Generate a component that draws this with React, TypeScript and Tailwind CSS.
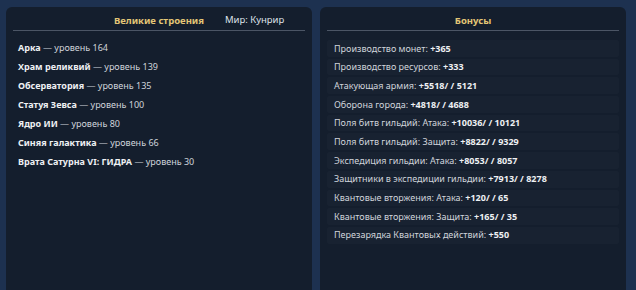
import { FC } from 'react';

type Wonder = { name: string; level: number };
type Bonus = { label: string; value: string };

const wonders: Wonder[] = [
  { name: 'Арка', level: 164 },
  { name: 'Храм реликвий', level: 139 },
  { name: 'Обсерватория', level: 135 },
  { name: 'Статуя Зевса', level: 100 },
  { name: 'Ядро ИИ', level: 80 },
  { name: 'Синяя галактика', level: 66 },
  { name: 'Врата Сатурна VI: ГИДРА', level: 30 },
];

const bonuses: Bonus[] = [
  { label: 'Производство монет:', value: '+365' },
  { label: 'Производство ресурсов:', value: '+333' },
  { label: 'Атакующая армия:', value: '+5518/ / 5121' },
  { label: 'Оборона города:', value: '+4818/ / 4688' },
  { label: 'Поля битв гильдий: Атака:', value: '+10036/ / 10121' },
  { label: 'Поля битв гильдий: Защита:', value: '+8822/ / 9329' },
  { label: 'Экспедиция гильдии: Атака:', value: '+8053/ / 8057' },
  { label: 'Защитники в экспедиции гильдии:', value: '+7913/ / 8278' },
  { label: 'Квантовые вторжения: Атака:', value: '+120/ / 65' },
  { label: 'Квантовые вторжения: Защита:', value: '+165/ / 35' },
  { label: 'Перезарядка Квантовых действий:', value: '+550' },
];

const Panel: FC<{ title: string; extra?: string; children: React.ReactNode }> = (props) => {
  return (
    <div className="flex flex-col w-[306px] h-[300px] rounded-[6px] bg-[#141e2d] px-[7px] pt-[5px]">
      <div className="relative flex items-center justify-center h-[19px] border-b border-[#4b5565]">
        <div className="text-[9.5px] font-bold text-[#e3c676]">{props.title}</div>
        {props.extra && (
          <div className="absolute left-[212px] top-[1px] text-[9.5px] text-[#dfe3ea]">{props.extra}</div>
        )}
      </div>
      {props.children}
    </div>
  );
};

export default function App() {
  return (
    <div
      className="flex gap-[8px] w-[636px] h-[290px] overflow-hidden bg-[#1d3150] pl-[6px] pt-[7px]"
      style={{ fontFamily: '"Noto Sans", "Open Sans", sans-serif' }}
    >
      <Panel title="Великие строения" extra="Мир: Кунрир">
        <div className="flex flex-col gap-[7px] pt-[11px] px-[5px]">
          {wonders.map((w) => (
            <div key={w.name} className="h-[12px] leading-[12px] text-[9px] text-[#d0d4db] whitespace-nowrap">
              <span className="font-bold text-[#eef0f3]">{w.name}</span> — уровень {w.level}
            </div>
          ))}
        </div>
      </Panel>

      <Panel title="Бонусы">
        <div className="flex flex-col gap-[2px] pt-[9px]">
          {bonuses.map((b) => (
            <div
              key={b.label}
              className="flex items-center h-[16.7px] rounded-[2px] bg-white/[0.02] px-[7px] text-[9px] text-[#d0d4db] whitespace-nowrap"
            >
              {b.label}&nbsp;<span className="font-bold text-[#eef0f3]">{b.value}</span>
            </div>
          ))}
        </div>
      </Panel>
    </div>
  );
}
